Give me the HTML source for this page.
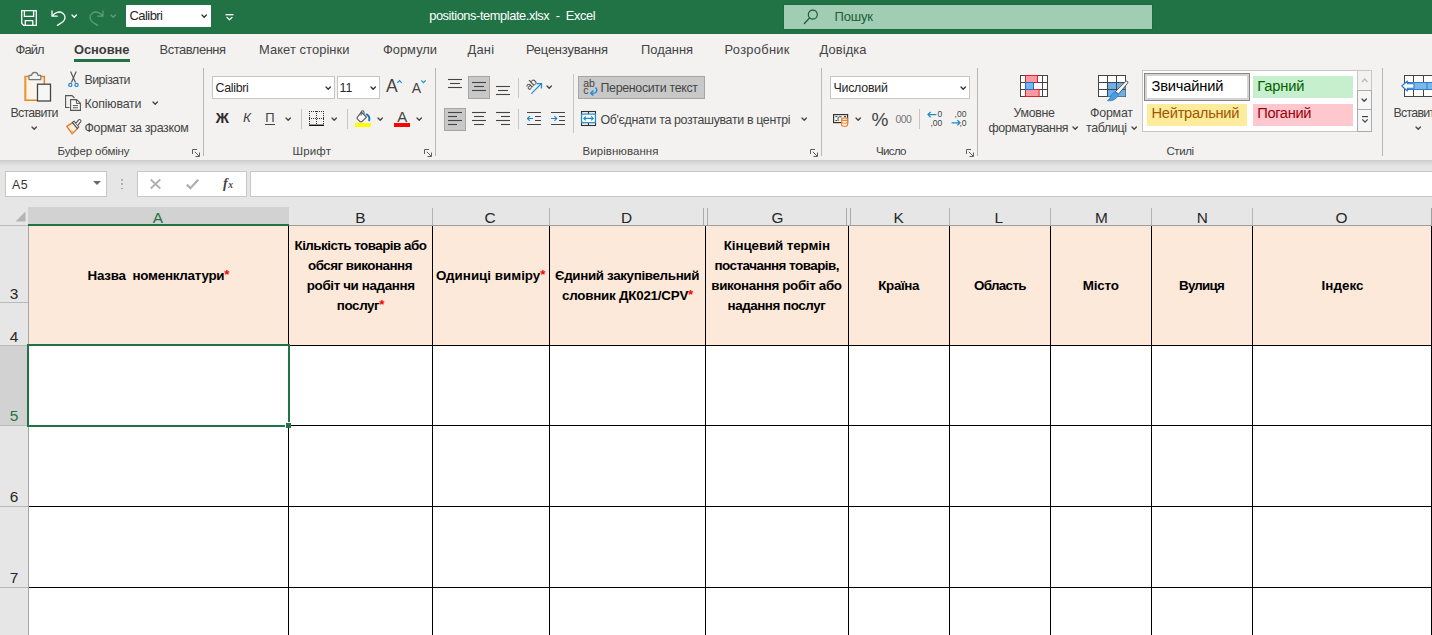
<!DOCTYPE html>
<html lang="uk"><head><meta charset="utf-8"><title>positions-template.xlsx - Excel</title>
<style>
html,body{margin:0;padding:0;background:#fff;}
body{width:1432px;height:635px;overflow:hidden;position:relative;font-family:"Liberation Sans",sans-serif;}
#app{position:absolute;left:0;top:0;width:1432px;height:635px;overflow:hidden;}
</style></head><body><div id="app">
<div style="position:absolute;left:0px;top:0px;width:1432px;height:34px;background:#217346"></div>
<svg style="position:absolute;left:21px;top:10px;overflow:visible;" width="16" height="16" viewBox="0 0 16 16" fill="none"><path d="M0.7 0.7 H15.3 V15.3 H2.6 L0.7 13.4 Z" stroke="#fff" stroke-width="1.3" stroke-linejoin="round"/><path d="M3.4 0.7 V6.4 H12.6 V0.7 M4.3 15.3 V10.6 H11.8 V15.3" stroke="#fff" stroke-width="1.3"/></svg>
<svg style="position:absolute;left:50.8px;top:10px;overflow:visible;" width="16" height="16" viewBox="0 0 16 16" fill="none"><path d="M1 1 V6.2 H6.2 M1.4 6 C3.5 2.2 8.5 0.8 11.8 3.2 C15 5.6 14.6 9.6 11.6 12 L6.4 15.4" stroke="#fff" stroke-width="1.3" stroke-linecap="round" stroke-linejoin="round"/></svg>
<svg style="position:absolute;left:72.4px;top:15.45px;overflow:visible;" width="4.4" height="2.3" viewBox="0 0 4.4 2.3" fill="none"><path d="M0 0 L2.2 2.3 L4.4 0" stroke="#fff" stroke-width="1.3" stroke-linecap="round" stroke-linejoin="round"/></svg>
<svg style="position:absolute;left:88.4px;top:10px;overflow:visible;" width="16" height="16" viewBox="0 0 16 16" fill="none"><path d="M15 1 V6.2 H9.8 M14.6 6 C12.5 2.2 7.5 0.8 4.2 3.2 C1 5.6 1.4 9.6 4.4 12 L9.6 15.4" stroke="#5f9c7b" stroke-width="1.3" stroke-linecap="round" stroke-linejoin="round"/></svg>
<svg style="position:absolute;left:111.2px;top:15.45px;overflow:visible;" width="4.4" height="2.3" viewBox="0 0 4.4 2.3" fill="none"><path d="M0 0 L2.2 2.3 L4.4 0" stroke="#5f9c7b" stroke-width="1.3" stroke-linecap="round" stroke-linejoin="round"/></svg>
<div style="position:absolute;left:126px;top:5px;width:85px;height:22px;background:#fff"></div>
<span style="position:absolute;left:129.5px;top:9.20px;font-family:'Liberation Sans', sans-serif;font-size:13px;line-height:1;font-weight:400;color:#262626;letter-spacing:-0.557px;white-space:pre;">Calibri</span>
<svg style="position:absolute;left:202px;top:15.25px;overflow:visible;" width="4.4" height="2.3" viewBox="0 0 4.4 2.3" fill="none"><path d="M0 0 L2.2 2.3 L4.4 0" stroke="#333" stroke-width="1.3" stroke-linecap="round" stroke-linejoin="round"/></svg>
<svg style="position:absolute;left:225px;top:14px;overflow:visible;" width="9" height="7" viewBox="0 0 9 7" fill="none"><path d="M0.5 0.7 H8.5" stroke="#fff" stroke-width="1.3"/><path d="M2 3.4 L4.5 5.8 L7 3.4" stroke="#fff" stroke-width="1.3" stroke-linecap="round" stroke-linejoin="round"/></svg>
<span style="position:absolute;left:429.2px;top:10.06px;font-family:'Liberation Sans', sans-serif;font-size:12.8px;line-height:1;font-weight:400;color:#ffffff;letter-spacing:-0.404px;white-space:pre;">positions-template.xlsx  -  Excel</span>
<div style="position:absolute;left:784px;top:5px;width:368px;height:24px;background:#a0cdb4;box-shadow:0 0 0 1px #1d6a3f"></div>
<svg style="position:absolute;left:804px;top:10px;overflow:visible;" width="15" height="14" viewBox="0 0 15 14" fill="none"><circle cx="8.8" cy="4.6" r="4.5" stroke="#185c37" stroke-width="1.2"/><path d="M5.6 7.9 L0.4 13.5" stroke="#185c37" stroke-width="1.3" stroke-linecap="round"/></svg>
<span style="position:absolute;left:834.5px;top:9.70px;font-family:'Liberation Sans', sans-serif;font-size:13px;line-height:1;font-weight:400;color:#1b5e38;letter-spacing:-0.176px;white-space:pre;">Пошук</span>
<div style="position:absolute;left:0px;top:34px;width:1432px;height:126px;background:#f3f2f1"></div>
<span style="position:absolute;left:15.5px;top:43.68px;font-family:'Liberation Sans', sans-serif;font-size:12.9px;line-height:1;font-weight:400;color:#444444;letter-spacing:-0.901px;white-space:pre;">Файл</span>
<span style="position:absolute;left:74px;top:43.68px;font-family:'Liberation Sans', sans-serif;font-size:12.9px;line-height:1;font-weight:700;color:#3c3c3c;letter-spacing:-0.042px;white-space:pre;">Основне</span>
<span style="position:absolute;left:159.5px;top:43.68px;font-family:'Liberation Sans', sans-serif;font-size:12.9px;line-height:1;font-weight:400;color:#444444;letter-spacing:-0.438px;white-space:pre;">Вставлення</span>
<span style="position:absolute;left:259px;top:43.68px;font-family:'Liberation Sans', sans-serif;font-size:12.9px;line-height:1;font-weight:400;color:#444444;letter-spacing:0.082px;white-space:pre;">Макет сторінки</span>
<span style="position:absolute;left:383px;top:43.68px;font-family:'Liberation Sans', sans-serif;font-size:12.9px;line-height:1;font-weight:400;color:#444444;letter-spacing:-0.005px;white-space:pre;">Формули</span>
<span style="position:absolute;left:467.5px;top:43.68px;font-family:'Liberation Sans', sans-serif;font-size:12.9px;line-height:1;font-weight:400;color:#444444;letter-spacing:0.203px;white-space:pre;">Дані</span>
<span style="position:absolute;left:526px;top:43.68px;font-family:'Liberation Sans', sans-serif;font-size:12.9px;line-height:1;font-weight:400;color:#444444;letter-spacing:-0.185px;white-space:pre;">Рецензування</span>
<span style="position:absolute;left:641px;top:43.68px;font-family:'Liberation Sans', sans-serif;font-size:12.9px;line-height:1;font-weight:400;color:#444444;letter-spacing:-0.01px;white-space:pre;">Подання</span>
<span style="position:absolute;left:724.5px;top:43.68px;font-family:'Liberation Sans', sans-serif;font-size:12.9px;line-height:1;font-weight:400;color:#444444;letter-spacing:0.293px;white-space:pre;">Розробник</span>
<span style="position:absolute;left:819.5px;top:43.68px;font-family:'Liberation Sans', sans-serif;font-size:12.9px;line-height:1;font-weight:400;color:#444444;letter-spacing:0.104px;white-space:pre;">Довідка</span>
<div style="position:absolute;left:74px;top:59px;width:56px;height:3px;background:#217346"></div>
<div style="position:absolute;left:203px;top:68px;width:1px;height:88px;background:#bab8b6"></div>
<div style="position:absolute;left:435px;top:68px;width:1px;height:88px;background:#bab8b6"></div>
<div style="position:absolute;left:821px;top:68px;width:1px;height:88px;background:#bab8b6"></div>
<div style="position:absolute;left:977px;top:68px;width:1px;height:88px;background:#bab8b6"></div>
<div style="position:absolute;left:1382px;top:68px;width:1px;height:88px;background:#bab8b6"></div>
<span style="position:absolute;left:57.5px;top:146.27px;font-family:'Liberation Sans', sans-serif;font-size:11.5px;line-height:1;font-weight:400;color:#444444;letter-spacing:-0.151px;white-space:pre;">Буфер обміну</span>
<span style="position:absolute;left:292.5px;top:146.27px;font-family:'Liberation Sans', sans-serif;font-size:11.5px;line-height:1;font-weight:400;color:#444444;letter-spacing:0.164px;white-space:pre;">Шрифт</span>
<span style="position:absolute;left:582.5px;top:146.27px;font-family:'Liberation Sans', sans-serif;font-size:11.5px;line-height:1;font-weight:400;color:#444444;letter-spacing:0.051px;white-space:pre;">Вирівнювання</span>
<span style="position:absolute;left:876px;top:146.27px;font-family:'Liberation Sans', sans-serif;font-size:11.5px;line-height:1;font-weight:400;color:#444444;letter-spacing:-0.645px;white-space:pre;">Число</span>
<span style="position:absolute;left:1166.5px;top:146.27px;font-family:'Liberation Sans', sans-serif;font-size:11.5px;line-height:1;font-weight:400;color:#444444;letter-spacing:-0.441px;white-space:pre;">Стилі</span>
<svg style="position:absolute;left:192px;top:148.5px;overflow:visible;" width="8" height="8" viewBox="0 0 8 8" fill="none"><path d="M0.5 5 V0.5 H5 M7.5 3.5 V7.5 H3.5 M2.8 2.8 L7 7" stroke="#605e5c" stroke-width="1"/></svg>
<svg style="position:absolute;left:424px;top:148.5px;overflow:visible;" width="8" height="8" viewBox="0 0 8 8" fill="none"><path d="M0.5 5 V0.5 H5 M7.5 3.5 V7.5 H3.5 M2.8 2.8 L7 7" stroke="#605e5c" stroke-width="1"/></svg>
<svg style="position:absolute;left:810px;top:148.5px;overflow:visible;" width="8" height="8" viewBox="0 0 8 8" fill="none"><path d="M0.5 5 V0.5 H5 M7.5 3.5 V7.5 H3.5 M2.8 2.8 L7 7" stroke="#605e5c" stroke-width="1"/></svg>
<svg style="position:absolute;left:966px;top:148.5px;overflow:visible;" width="8" height="8" viewBox="0 0 8 8" fill="none"><path d="M0.5 5 V0.5 H5 M7.5 3.5 V7.5 H3.5 M2.8 2.8 L7 7" stroke="#605e5c" stroke-width="1"/></svg>
<svg style="position:absolute;left:24px;top:72px;overflow:visible;" width="28" height="30" viewBox="0 0 28 30" fill="none"><path d="M12.9 28.2 H1.1 V4.6 H20.3 V12" stroke="#e8861c" stroke-width="1.5" fill="#fbf4ea"/><path d="M2.5 27 V6 H19" stroke="#f7cf9d" stroke-width="1"/><path d="M5 7.6 V3.4 H7.6 C8 -0.6 13.6 -0.6 14 3.4 H16.8 V7.6 Z" stroke="#767676" stroke-width="1.1" fill="#f3f2f1" stroke-linejoin="round"/><rect x="13.5" y="12.2" width="13" height="16.8" stroke="#444" stroke-width="1.3" fill="#f6f6f6"/></svg>
<span style="position:absolute;left:10.5px;top:106.50px;font-family:'Liberation Sans', sans-serif;font-size:12.4px;line-height:1;font-weight:400;color:#444444;letter-spacing:-0.714px;white-space:pre;">Вставити</span>
<svg style="position:absolute;left:32.4px;top:127.45px;overflow:visible;" width="4.4" height="2.3" viewBox="0 0 4.4 2.3" fill="none"><path d="M0 0 L2.2 2.3 L4.4 0" stroke="#444444" stroke-width="1.3" stroke-linecap="round" stroke-linejoin="round"/></svg>
<svg style="position:absolute;left:67.5px;top:71px;overflow:visible;" width="11" height="16" viewBox="0 0 11 16" fill="none"><path d="M2.6 0.4 L7.4 11.6 M8.2 0.4 L3.4 11.6" stroke="#555" stroke-width="1.15"/><circle cx="2.3" cy="13.9" r="1.6" stroke="#1e8bcd" stroke-width="1.2"/><circle cx="8.5" cy="13.9" r="1.6" stroke="#1e8bcd" stroke-width="1.2"/></svg>
<span style="position:absolute;left:84.5px;top:74.00px;font-family:'Liberation Sans', sans-serif;font-size:12.4px;line-height:1;font-weight:400;color:#444444;letter-spacing:-0.533px;white-space:pre;">Вирізати</span>
<svg style="position:absolute;left:65px;top:95px;overflow:visible;" width="16" height="16" viewBox="0 0 16 16" fill="none"><path d="M4.5 12.5 H0.6 V0.6 H7 L9.5 3" stroke="#555" stroke-width="1.1"/><path d="M5.6 4.6 H11.6 L15.4 8.2 V15.4 H5.6 Z" stroke="#555" stroke-width="1.1" fill="#fafafa"/><path d="M11.4 4.8 V8.4 H15.2 M7.8 10.6 H13 M7.8 12.8 H13" stroke="#555" stroke-width="1"/></svg>
<span style="position:absolute;left:84.5px;top:97.50px;font-family:'Liberation Sans', sans-serif;font-size:12.4px;line-height:1;font-weight:400;color:#444444;letter-spacing:-0.191px;white-space:pre;">Копіювати</span>
<svg style="position:absolute;left:153.4px;top:102.05px;overflow:visible;" width="4.4" height="2.3" viewBox="0 0 4.4 2.3" fill="none"><path d="M0 0 L2.2 2.3 L4.4 0" stroke="#444444" stroke-width="1.3" stroke-linecap="round" stroke-linejoin="round"/></svg>
<svg style="position:absolute;left:65.5px;top:119px;overflow:visible;" width="16" height="16" viewBox="0 0 16 16" fill="none"><path d="M0.8 7.4 L6.6 3.6 L11.4 9.6 L6.2 14.8 Z" fill="#fff3e2" stroke="#e8761a" stroke-width="1.3" stroke-linejoin="round"/><path d="M4.6 11 L8 12.4 L6.2 14.4 Z" fill="#f7b469"/><path d="M6.4 3.4 L8 2.2 L12.8 8 L11.4 9.6 Z" stroke="#555" stroke-width="1.1" fill="#fafafa" stroke-linejoin="round"/><path d="M9.8 4.4 L12.6 0.9 C13.6 -0.2 15.6 1.4 14.8 2.6 L12 6.2" stroke="#555" stroke-width="1.1" fill="#fafafa"/></svg>
<span style="position:absolute;left:84.5px;top:121.50px;font-family:'Liberation Sans', sans-serif;font-size:12.4px;line-height:1;font-weight:400;color:#444444;letter-spacing:-0.322px;white-space:pre;">Формат за зразком</span>
<div style="position:absolute;left:212px;top:76px;width:123px;height:23px;background:#fff;border:1px solid #c6c6c6;box-sizing:border-box"></div>
<span style="position:absolute;left:215.5px;top:81.50px;font-family:'Liberation Sans', sans-serif;font-size:12.4px;line-height:1;font-weight:400;color:#262626;letter-spacing:-0.304px;white-space:pre;">Calibri</span>
<svg style="position:absolute;left:325.8px;top:87.15px;overflow:visible;" width="4.4" height="2.3" viewBox="0 0 4.4 2.3" fill="none"><path d="M0 0 L2.2 2.3 L4.4 0" stroke="#333" stroke-width="1.3" stroke-linecap="round" stroke-linejoin="round"/></svg>
<div style="position:absolute;left:337px;top:76px;width:43px;height:23px;background:#fff;border:1px solid #c6c6c6;box-sizing:border-box"></div>
<span style="position:absolute;left:339.5px;top:81.50px;font-family:'Liberation Sans', sans-serif;font-size:12.4px;line-height:1;font-weight:400;color:#262626;letter-spacing:0.125px;white-space:pre;">11</span>
<svg style="position:absolute;left:371px;top:87.15px;overflow:visible;" width="4.4" height="2.3" viewBox="0 0 4.4 2.3" fill="none"><path d="M0 0 L2.2 2.3 L4.4 0" stroke="#333" stroke-width="1.3" stroke-linecap="round" stroke-linejoin="round"/></svg>
<span style="position:absolute;left:386px;top:77.59px;font-family:'Liberation Sans', sans-serif;font-size:17.5px;line-height:1;font-weight:400;color:#444444;letter-spacing:0px;white-space:pre;">A</span>
<svg style="position:absolute;left:397.4px;top:80.2px;overflow:visible;" width="5" height="3" viewBox="0 0 5 3" fill="none"><path d="M0.3 2.8 L2.5 0.5 L4.7 2.8" stroke="#1e8bcd" stroke-width="1.2"/></svg>
<span style="position:absolute;left:411.8px;top:80.55px;font-family:'Liberation Sans', sans-serif;font-size:14px;line-height:1;font-weight:400;color:#444444;letter-spacing:0px;white-space:pre;">A</span>
<svg style="position:absolute;left:421px;top:80.2px;overflow:visible;" width="5" height="3" viewBox="0 0 5 3" fill="none"><path d="M0.3 0.4 L2.5 2.7 L4.7 0.4" stroke="#1e8bcd" stroke-width="1.2"/></svg>
<span style="position:absolute;left:215.8px;top:110.53px;font-family:'Liberation Sans', sans-serif;font-size:14.5px;line-height:1;font-weight:700;color:#2b2b2b;letter-spacing:0px;white-space:pre;">Ж</span>
<span style="position:absolute;left:243px;top:111.17px;font-family:'Liberation Sans', sans-serif;font-size:13.5px;line-height:1;font-weight:400;color:#444444;font-style:italic;letter-spacing:0px;white-space:pre;">К</span>
<span style="position:absolute;left:265.3px;top:111.30px;font-family:'Liberation Sans', sans-serif;font-size:13px;line-height:1;font-weight:400;color:#444444;letter-spacing:0px;white-space:pre;">П</span>
<div style="position:absolute;left:265px;top:123.6px;width:10px;height:1px;background:#444444"></div>
<svg style="position:absolute;left:285.7px;top:118.35px;overflow:visible;" width="4.4" height="2.3" viewBox="0 0 4.4 2.3" fill="none"><path d="M0 0 L2.2 2.3 L4.4 0" stroke="#444444" stroke-width="1.3" stroke-linecap="round" stroke-linejoin="round"/></svg>
<div style="position:absolute;left:301px;top:109px;width:1px;height:20px;background:#c8c6c4"></div>
<svg style="position:absolute;left:309px;top:111px;overflow:visible;" width="15" height="15" viewBox="0 0 15 15" fill="none"><path d="M0.5 0 V14 M7.5 0 V14 M14.5 0 V14" stroke="#333" stroke-width="1" stroke-dasharray="1 1"/><path d="M0 0.5 H15 M0 7.5 H15" stroke="#333" stroke-width="1" stroke-dasharray="1 1"/><path d="M0 14.3 H15" stroke="#111" stroke-width="1.4"/></svg>
<svg style="position:absolute;left:331.9px;top:118.35px;overflow:visible;" width="4.4" height="2.3" viewBox="0 0 4.4 2.3" fill="none"><path d="M0 0 L2.2 2.3 L4.4 0" stroke="#444444" stroke-width="1.3" stroke-linecap="round" stroke-linejoin="round"/></svg>
<div style="position:absolute;left:347.3px;top:109px;width:1px;height:20px;background:#c8c6c4"></div>
<svg style="position:absolute;left:356px;top:110px;overflow:visible;" width="15" height="13" viewBox="0 0 15 13" fill="none"><path d="M5.4 2.2 L10.4 7.2 L6.2 11.4 C5.4 12.2 4.6 12.2 3.8 11.4 L1.6 9.2 C0.8 8.4 0.8 7.6 1.6 6.8 Z" stroke="#555" stroke-width="1.15" fill="#fafafa" stroke-linejoin="round"/><path d="M5.2 5.4 V2.2 C5.2 0.2 8 0.2 8 2.2 V4.6" stroke="#555" stroke-width="1.1"/><path d="M10.6 4.4 C13.2 5.6 13.6 8.4 13.2 10.4" stroke="#1b6ec2" stroke-width="1.9" stroke-linecap="round"/></svg>
<div style="position:absolute;left:355px;top:123px;width:16px;height:4px;background:#ffff00"></div>
<svg style="position:absolute;left:377.9px;top:118.35px;overflow:visible;" width="4.4" height="2.3" viewBox="0 0 4.4 2.3" fill="none"><path d="M0 0 L2.2 2.3 L4.4 0" stroke="#444444" stroke-width="1.3" stroke-linecap="round" stroke-linejoin="round"/></svg>
<span style="position:absolute;left:397.3px;top:108.90px;font-family:'Liberation Sans', sans-serif;font-size:15px;line-height:1;font-weight:400;color:#444444;letter-spacing:0px;white-space:pre;">A</span>
<div style="position:absolute;left:394px;top:123px;width:16px;height:4px;background:#ff0000"></div>
<svg style="position:absolute;left:416.9px;top:118.35px;overflow:visible;" width="4.4" height="2.3" viewBox="0 0 4.4 2.3" fill="none"><path d="M0 0 L2.2 2.3 L4.4 0" stroke="#444444" stroke-width="1.3" stroke-linecap="round" stroke-linejoin="round"/></svg>
<svg style="position:absolute;left:448px;top:79px;overflow:visible;" width="14" height="12" viewBox="0 0 14 12" fill="none"><path d="M0 0.5 H14" stroke="#444" stroke-width="1.1"/><path d="M2 4.5 H12" stroke="#444" stroke-width="1.1"/><path d="M0 8.5 H14" stroke="#444" stroke-width="1.1"/></svg>
<div style="position:absolute;left:468px;top:76px;width:22px;height:22.5px;background:#c8c8c8;border:1px solid #a6a6a6;box-sizing:border-box"></div>
<svg style="position:absolute;left:472px;top:82px;overflow:visible;" width="14" height="12" viewBox="0 0 14 12" fill="none"><path d="M0 0.5 H14" stroke="#444" stroke-width="1.1"/><path d="M2 4.5 H12" stroke="#444" stroke-width="1.1"/><path d="M0 8.5 H14" stroke="#444" stroke-width="1.1"/></svg>
<svg style="position:absolute;left:496px;top:86px;overflow:visible;" width="14" height="12" viewBox="0 0 14 12" fill="none"><path d="M0 0.5 H14" stroke="#444" stroke-width="1.1"/><path d="M2 4.5 H12" stroke="#444" stroke-width="1.1"/><path d="M0 8.5 H14" stroke="#444" stroke-width="1.1"/></svg>
<div style="position:absolute;left:518px;top:77.5px;width:1px;height:20px;background:#c8c6c4"></div>
<span style="position:absolute;left:530px;top:80.51px;font-family:'Liberation Sans', sans-serif;font-size:10.5px;line-height:1;font-weight:400;color:#444444;letter-spacing:0px;white-space:pre;transform:rotate(-42deg);transform-origin:0 100%;">ab</span>
<svg style="position:absolute;left:531px;top:83px;overflow:visible;" width="11" height="11" viewBox="0 0 11 11" fill="none"><path d="M0.4 10.6 L10.4 0.6 M5.6 0.5 H10.5 V5.4" stroke="#1e8bcd" stroke-width="1.25"/></svg>
<svg style="position:absolute;left:547.1px;top:86.35px;overflow:visible;" width="4.4" height="2.3" viewBox="0 0 4.4 2.3" fill="none"><path d="M0 0 L2.2 2.3 L4.4 0" stroke="#444444" stroke-width="1.3" stroke-linecap="round" stroke-linejoin="round"/></svg>
<div style="position:absolute;left:573px;top:74px;width:1px;height:58.5px;background:#c8c6c4"></div>
<div style="position:absolute;left:578px;top:76px;width:127px;height:22.5px;background:#c8c8c8;border:1px solid #a6a6a6;box-sizing:border-box"></div>
<span style="position:absolute;left:583.2px;top:77.91px;font-family:'Liberation Sans', sans-serif;font-size:10.5px;line-height:1;font-weight:400;color:#444444;letter-spacing:0px;white-space:pre;">ab</span>
<span style="position:absolute;left:583.2px;top:85.31px;font-family:'Liberation Sans', sans-serif;font-size:10.5px;line-height:1;font-weight:400;color:#444444;letter-spacing:0px;white-space:pre;">c</span>
<svg style="position:absolute;left:588.5px;top:86.5px;overflow:visible;" width="9" height="9" viewBox="0 0 9 9" fill="none"><path d="M6.5 0.5 C9.5 3.5 7 7 2.2 6.2 M4.4 3.6 L1.6 6.2 L4.4 8.6" stroke="#1e8bcd" stroke-width="1.3" fill="none"/></svg>
<span style="position:absolute;left:600.5px;top:81.50px;font-family:'Liberation Sans', sans-serif;font-size:12.4px;line-height:1;font-weight:400;color:#444444;letter-spacing:-0.322px;white-space:pre;">Переносити текст</span>
<div style="position:absolute;left:444px;top:108px;width:22px;height:22.5px;background:#c8c8c8;border:1px solid #a6a6a6;box-sizing:border-box"></div>
<svg style="position:absolute;left:448px;top:112px;overflow:visible;" width="14" height="16" viewBox="0 0 14 16" fill="none"><path d="M0 0.5 H14" stroke="#444" stroke-width="1.1"/><path d="M0 4.5 H9" stroke="#444" stroke-width="1.1"/><path d="M0 8.5 H14" stroke="#444" stroke-width="1.1"/><path d="M0 12.5 H9" stroke="#444" stroke-width="1.1"/></svg>
<svg style="position:absolute;left:472px;top:112px;overflow:visible;" width="14" height="16" viewBox="0 0 14 16" fill="none"><path d="M0 0.5 H14" stroke="#444" stroke-width="1.1"/><path d="M2 4.5 H12" stroke="#444" stroke-width="1.1"/><path d="M0 8.5 H14" stroke="#444" stroke-width="1.1"/><path d="M2 12.5 H12" stroke="#444" stroke-width="1.1"/></svg>
<svg style="position:absolute;left:496px;top:112px;overflow:visible;" width="14" height="16" viewBox="0 0 14 16" fill="none"><path d="M0 0.5 H14" stroke="#444" stroke-width="1.1"/><path d="M5 4.5 H14" stroke="#444" stroke-width="1.1"/><path d="M0 8.5 H14" stroke="#444" stroke-width="1.1"/><path d="M5 12.5 H14" stroke="#444" stroke-width="1.1"/></svg>
<div style="position:absolute;left:518px;top:109px;width:1px;height:20px;background:#c8c6c4"></div>
<svg style="position:absolute;left:527px;top:112px;overflow:visible;" width="14" height="13" viewBox="0 0 14 13" fill="none"><path d="M0 0.5 H14 M8 4.5 H14 M8 8.5 H14 M0 12.5 H14" stroke="#444" stroke-width="1.1"/><path d="M6 6.5 H0.6 M2.8 4.2 L0.5 6.5 L2.8 8.8" stroke="#1e8bcd" stroke-width="1.2"/></svg>
<svg style="position:absolute;left:550.5px;top:112px;overflow:visible;" width="14" height="13" viewBox="0 0 14 13" fill="none"><path d="M0 0.5 H14 M8 4.5 H14 M8 8.5 H14 M0 12.5 H14" stroke="#444" stroke-width="1.1"/><path d="M0 6.5 H5.6 M3.4 4.2 L5.7 6.5 L3.4 8.8" stroke="#1e8bcd" stroke-width="1.2"/></svg>
<svg style="position:absolute;left:581px;top:111px;overflow:visible;" width="15" height="15" viewBox="0 0 15 15" fill="none"><rect x="0.5" y="0.5" width="14" height="14" stroke="#333" stroke-width="1.1"/><path d="M7.5 0.5 V3 M7.5 12 V14.5" stroke="#333" stroke-width="1.1"/><rect x="0.6" y="3.1" width="13.8" height="8.6" stroke="#1e8bcd" stroke-width="1.2" fill="#fff"/><path d="M2.8 7.4 H12.2 M4.8 5.4 L2.8 7.4 L4.8 9.4 M10.2 5.4 L12.2 7.4 L10.2 9.4" stroke="#1e8bcd" stroke-width="1.2"/></svg>
<span style="position:absolute;left:600.5px;top:113.50px;font-family:'Liberation Sans', sans-serif;font-size:12.4px;line-height:1;font-weight:400;color:#444444;letter-spacing:-0.345px;white-space:pre;">Об'єднати та розташувати в центрі</span>
<svg style="position:absolute;left:802px;top:118.35px;overflow:visible;" width="4.4" height="2.3" viewBox="0 0 4.4 2.3" fill="none"><path d="M0 0 L2.2 2.3 L4.4 0" stroke="#444444" stroke-width="1.3" stroke-linecap="round" stroke-linejoin="round"/></svg>
<div style="position:absolute;left:830px;top:76px;width:140px;height:23px;background:#fff;border:1px solid #c6c6c6;box-sizing:border-box"></div>
<span style="position:absolute;left:833.5px;top:81.50px;font-family:'Liberation Sans', sans-serif;font-size:12.4px;line-height:1;font-weight:400;color:#262626;letter-spacing:-0.252px;white-space:pre;">Числовий</span>
<svg style="position:absolute;left:961.1px;top:87.15px;overflow:visible;" width="4.4" height="2.3" viewBox="0 0 4.4 2.3" fill="none"><path d="M0 0 L2.2 2.3 L4.4 0" stroke="#333" stroke-width="1.3" stroke-linecap="round" stroke-linejoin="round"/></svg>
<svg style="position:absolute;left:832.5px;top:113px;overflow:visible;" width="17" height="14" viewBox="0 0 17 14" fill="none"><rect x="0.6" y="1.6" width="14" height="8" stroke="#333" stroke-width="1.2" fill="#fafafa"/><path d="M2.4 3.6 H4.4 M2.4 7.6 H4.4 M11 3.6 H13 M6 7.6 C4.6 7.6 4.6 3.8 6.4 3.8 H8.6" stroke="#333" stroke-width="1"/><path d="M8.6 6.2 V12 C8.6 13.6 14.6 13.6 14.6 12 V6.2" fill="#fdf3e4" stroke="#e8812d" stroke-width="1.1"/><ellipse cx="11.6" cy="6.2" rx="3" ry="1.3" fill="#fdf3e4" stroke="#e8812d" stroke-width="1.1"/><path d="M8.6 9 C8.6 10.6 14.6 10.6 14.6 9" stroke="#e8812d" stroke-width="1"/></svg>
<svg style="position:absolute;left:855.8px;top:118.35px;overflow:visible;" width="4.4" height="2.3" viewBox="0 0 4.4 2.3" fill="none"><path d="M0 0 L2.2 2.3 L4.4 0" stroke="#444444" stroke-width="1.3" stroke-linecap="round" stroke-linejoin="round"/></svg>
<span style="position:absolute;left:871.5px;top:109.52px;font-family:'Liberation Sans', sans-serif;font-size:19px;line-height:1;font-weight:400;color:#444444;letter-spacing:0px;white-space:pre;">%</span>
<span style="position:absolute;left:895.5px;top:113.71px;font-family:'Liberation Sans', sans-serif;font-size:10.5px;line-height:1;font-weight:400;color:#777;letter-spacing:-0.616px;white-space:pre;">000</span>
<div style="position:absolute;left:919px;top:109px;width:1px;height:20px;background:#c8c6c4"></div>
<svg style="position:absolute;left:927px;top:111px;overflow:visible;" width="15" height="15" viewBox="0 0 15 15" fill="none"><path d="M9.4 3.6 H1 M3.6 1 L1 3.6 L3.6 6.2" stroke="#1e8bcd" stroke-width="1.25"/></svg>
<span style="position:absolute;left:937.6px;top:110.40px;font-family:'Liberation Sans', sans-serif;font-size:8.5px;line-height:1;font-weight:400;color:#444444;letter-spacing:0px;white-space:pre;">0</span>
<span style="position:absolute;left:930.4px;top:118.80px;font-family:'Liberation Sans', sans-serif;font-size:8.5px;line-height:1;font-weight:400;color:#444444;letter-spacing:0px;white-space:pre;">,00</span>
<svg style="position:absolute;left:951px;top:111px;overflow:visible;" width="15" height="15" viewBox="0 0 15 15" fill="none"><path d="M0.6 11.8 H9 M6.4 9.2 L9 11.8 L6.4 14.4" stroke="#1e8bcd" stroke-width="1.25"/></svg>
<span style="position:absolute;left:954.6px;top:110.40px;font-family:'Liberation Sans', sans-serif;font-size:8.5px;line-height:1;font-weight:400;color:#444444;letter-spacing:0px;white-space:pre;">,00</span>
<span style="position:absolute;left:959.4px;top:118.80px;font-family:'Liberation Sans', sans-serif;font-size:8.5px;line-height:1;font-weight:400;color:#444444;letter-spacing:0px;white-space:pre;">,0</span>
<svg style="position:absolute;left:1020px;top:75px;overflow:visible;" width="28" height="22" viewBox="0 0 28 22" fill="none"><rect x="0.5" y="0.5" width="27" height="21" fill="#fff" stroke="#444" stroke-width="1"/><path d="M5.5 0.5 V21.5 M22.5 0.5 V21.5 M0.5 7.5 H27.5 M0.5 14.5 H27.5" stroke="#444" stroke-width="1"/><rect x="5.5" y="0.5" width="12" height="7" fill="#fb9aa2" stroke="#e2202e" stroke-width="1"/><rect x="5.5" y="14.5" width="13.6" height="7" fill="#fb9aa2" stroke="#e2202e" stroke-width="1"/><rect x="5.5" y="7.5" width="8" height="7" fill="#79b4ea" stroke="#1f73c9" stroke-width="1"/></svg>
<span style="position:absolute;left:1013.5px;top:106.50px;font-family:'Liberation Sans', sans-serif;font-size:12.4px;line-height:1;font-weight:400;color:#444444;letter-spacing:-0.309px;white-space:pre;">Умовне</span>
<span style="position:absolute;left:988.5px;top:122.00px;font-family:'Liberation Sans', sans-serif;font-size:12.4px;line-height:1;font-weight:400;color:#444444;letter-spacing:-0.442px;white-space:pre;">форматування</span>
<svg style="position:absolute;left:1073.4px;top:127.05px;overflow:visible;" width="4.4" height="2.3" viewBox="0 0 4.4 2.3" fill="none"><path d="M0 0 L2.2 2.3 L4.4 0" stroke="#444444" stroke-width="1.3" stroke-linecap="round" stroke-linejoin="round"/></svg>
<svg style="position:absolute;left:1097.5px;top:75px;overflow:visible;" width="31" height="27" viewBox="0 0 31 27" fill="none"><rect x="0.5" y="0.5" width="27" height="21" fill="#fff" stroke="#444" stroke-width="1"/><rect x="9.5" y="7.5" width="18" height="14" fill="#6cb0ea"/><path d="M0.5 7.5 H27.5 M0.5 14.5 H27.5 M9.5 0.5 V21.5 M18.5 0.5 V21.5" stroke="#444" stroke-width="1"/><path d="M27.6 6.6 C29 5.4 30.6 6.8 29.6 8.2 L20.6 19 L17.4 16.6 Z" fill="#fafafa" stroke="#555" stroke-width="1"/><path d="M17 16.8 L20.4 19.4 C19.6 23.4 14.6 26.6 9.4 25.6 C12.8 24.2 12.4 18.6 17 16.8 Z" fill="#4a9be0" stroke="#2b7fcf" stroke-width="0.8"/></svg>
<span style="position:absolute;left:1090px;top:106.50px;font-family:'Liberation Sans', sans-serif;font-size:12.4px;line-height:1;font-weight:400;color:#444444;letter-spacing:-0.203px;white-space:pre;">Формат</span>
<span style="position:absolute;left:1086px;top:122.00px;font-family:'Liberation Sans', sans-serif;font-size:12.4px;line-height:1;font-weight:400;color:#444444;letter-spacing:-0.328px;white-space:pre;">таблиці</span>
<svg style="position:absolute;left:1131.6px;top:127.05px;overflow:visible;" width="4.4" height="2.3" viewBox="0 0 4.4 2.3" fill="none"><path d="M0 0 L2.2 2.3 L4.4 0" stroke="#444444" stroke-width="1.3" stroke-linecap="round" stroke-linejoin="round"/></svg>
<div style="position:absolute;left:1142px;top:70px;width:230px;height:62px;background:#fff;border:1px solid #c6c6c6;box-sizing:border-box"></div>
<div style="position:absolute;left:1144px;top:73px;width:106px;height:28px;background:#fff;border:1px solid #868686;box-sizing:border-box;box-shadow:inset 0 0 0 2px #d4d4d4"></div>
<span style="position:absolute;left:1151.5px;top:78.96px;font-family:'Liberation Sans', sans-serif;font-size:14.7px;line-height:1;font-weight:400;color:#000;letter-spacing:-0.18px;white-space:pre;">Звичайний</span>
<div style="position:absolute;left:1253px;top:76px;width:100px;height:21.5px;background:#c6efce"></div>
<span style="position:absolute;left:1257.2px;top:78.96px;font-family:'Liberation Sans', sans-serif;font-size:14.7px;line-height:1;font-weight:400;color:#006100;letter-spacing:-0.14px;white-space:pre;">Гарний</span>
<div style="position:absolute;left:1147px;top:104px;width:100px;height:21.5px;background:#ffeb9c"></div>
<span style="position:absolute;left:1151.5px;top:106.26px;font-family:'Liberation Sans', sans-serif;font-size:14.7px;line-height:1;font-weight:400;color:#9c5700;letter-spacing:-0.28px;white-space:pre;">Нейтральний</span>
<div style="position:absolute;left:1253px;top:104px;width:100px;height:21.5px;background:#ffc7ce"></div>
<span style="position:absolute;left:1257.2px;top:106.26px;font-family:'Liberation Sans', sans-serif;font-size:14.7px;line-height:1;font-weight:400;color:#9c0006;letter-spacing:-0.359px;white-space:pre;">Поганий</span>
<div style="position:absolute;left:1357px;top:70px;width:15px;height:21px;background:#f3f2f1;border:1px solid #c6c6c6;box-sizing:border-box"></div>
<div style="position:absolute;left:1357px;top:90px;width:15px;height:20px;background:#f6f6f6;border:1px solid #ababab;box-sizing:border-box"></div>
<div style="position:absolute;left:1357px;top:109px;width:15px;height:23px;background:#f6f6f6;border:1px solid #ababab;box-sizing:border-box"></div>
<svg style="position:absolute;left:1361.8px;top:78.6px;overflow:visible;" width="5.5" height="3" viewBox="0 0 5.5 3" fill="none"><path d="M0 3 L2.75 0 L5.5 3" stroke="#b8b8b8" stroke-width="1.2"/></svg>
<svg style="position:absolute;left:1362.3px;top:99.05px;overflow:visible;" width="4.4" height="2.3" viewBox="0 0 4.4 2.3" fill="none"><path d="M0 0 L2.2 2.3 L4.4 0" stroke="#444444" stroke-width="1.3" stroke-linecap="round" stroke-linejoin="round"/></svg>
<svg style="position:absolute;left:1361.5px;top:116.4px;overflow:visible;" width="6" height="7" viewBox="0 0 6 7" fill="none"><path d="M0 0.6 H6" stroke="#444" stroke-width="1.2"/><path d="M0.3 3.4 L3 6.2 L5.7 3.4" stroke="#444" stroke-width="1.2"/></svg>
<svg style="position:absolute;left:1401px;top:75px;overflow:visible;" width="31" height="22" viewBox="0 0 31 22" fill="none"><rect x="3.5" y="0.5" width="30" height="21" fill="#fff" stroke="#444" stroke-width="1"/><path d="M3.5 7.5 H34 M3.5 14.5 H34 M12.5 0.5 V7.5 M12.5 14.5 V21.5 M22.5 0.5 V7.5 M22.5 14.5 V21.5" stroke="#444" stroke-width="1"/><rect x="8" y="7.5" width="26" height="7" fill="#7db7ea" stroke="#2b7fcf" stroke-width="1"/><path d="M26 7.5 V14.5" stroke="#2b7fcf" stroke-width="1"/><path d="M6.4 6 L0.8 11 L6.4 16 V13.2 H13 V8.8 H6.4 Z" fill="#fafafa" stroke="#2b7fcf" stroke-width="1.1" stroke-linejoin="round"/></svg>
<span style="position:absolute;left:1393.4px;top:106.50px;font-family:'Liberation Sans', sans-serif;font-size:12.4px;line-height:1;font-weight:400;color:#444444;letter-spacing:-0.714px;white-space:pre;">Вставити</span>
<svg style="position:absolute;left:1415.5px;top:127.45px;overflow:visible;" width="4.4" height="2.3" viewBox="0 0 4.4 2.3" fill="none"><path d="M0 0 L2.2 2.3 L4.4 0" stroke="#444444" stroke-width="1.3" stroke-linecap="round" stroke-linejoin="round"/></svg>
<div style="position:absolute;left:0px;top:160px;width:1432px;height:7px;background:linear-gradient(#cbcbcb,#d9d9d9 40%,#e6e6e6)"></div>
<div style="position:absolute;left:0px;top:166px;width:1432px;height:41px;background:#e6e6e6"></div>
<div style="position:absolute;left:5px;top:171px;width:102px;height:26px;background:#fff;border:1px solid #c9c9c9;box-sizing:border-box"></div>
<span style="position:absolute;left:12px;top:178.79px;font-family:'Liberation Sans', sans-serif;font-size:12.3px;line-height:1;font-weight:400;color:#333;letter-spacing:0.453px;white-space:pre;">A5</span>
<svg style="position:absolute;left:92.5px;top:181px;overflow:visible;" width="8" height="4" viewBox="0 0 8 4" fill="none"><path d="M0 0 H8 L4 4 Z" fill="#6a6a6a"/></svg>
<div style="position:absolute;left:121px;top:179px;width:1.6px;height:1.6px;background:#a0a0a0;border-radius:1px"></div>
<div style="position:absolute;left:121px;top:183.3px;width:1.6px;height:1.6px;background:#a0a0a0;border-radius:1px"></div>
<div style="position:absolute;left:121px;top:187.6px;width:1.6px;height:1.6px;background:#a0a0a0;border-radius:1px"></div>
<div style="position:absolute;left:137px;top:171px;width:110px;height:26px;background:#fff;border:1px solid #c9c9c9;box-sizing:border-box"></div>
<svg style="position:absolute;left:150px;top:179px;overflow:visible;" width="11" height="10" viewBox="0 0 11 10" fill="none"><path d="M0.7 0.5 L10.3 9.5 M10.3 0.5 L0.7 9.5" stroke="#b0b0b0" stroke-width="1.8"/></svg>
<svg style="position:absolute;left:185.5px;top:179px;overflow:visible;" width="13" height="10" viewBox="0 0 13 10" fill="none"><path d="M0.8 5.6 L4.4 9.2 L12.2 0.8" stroke="#b0b0b0" stroke-width="2.3"/></svg>
<span style="position:absolute;left:223px;top:177.15px;font-family:'Liberation Serif', serif;font-size:14px;line-height:1;font-weight:700;color:#444;font-style:italic;letter-spacing:0px;white-space:pre;">f</span>
<span style="position:absolute;left:228.3px;top:180.96px;font-family:'Liberation Serif', serif;font-size:9.5px;line-height:1;font-weight:700;color:#444;font-style:italic;letter-spacing:0px;white-space:pre;">x</span>
<div style="position:absolute;left:250px;top:171px;width:1190px;height:26px;background:#fff;border:1px solid #c9c9c9;box-sizing:border-box"></div>
<div style="position:absolute;left:0px;top:207px;width:1432px;height:428px;background:#fff"></div>
<div style="position:absolute;left:0px;top:207px;width:1432px;height:19px;background:#e6e6e6"></div>
<div style="position:absolute;left:0px;top:226px;width:28px;height:409px;background:#e6e6e6"></div>
<svg style="position:absolute;left:14.5px;top:211px;overflow:visible;" width="11" height="11" viewBox="0 0 11 11" fill="none"><path d="M10.5 0.5 V10.5 H0.5 Z" fill="#b4b4b4"/></svg>
<div style="position:absolute;left:28px;top:207px;width:261px;height:17px;background:#d2d2d2"></div>
<div style="position:absolute;left:28px;top:224px;width:261px;height:2px;background:#217346"></div>
<div style="position:absolute;left:289px;top:225px;width:1143px;height:1px;background:#9e9e9e"></div>
<div style="position:absolute;left:0px;top:225px;width:28px;height:1px;background:#b9b9b9"></div>
<span style="position:absolute;left:152.8px;top:209.76px;font-family:'Liberation Sans', sans-serif;font-size:15.4px;line-height:1;font-weight:400;color:#217346;letter-spacing:0px;white-space:pre;">A</span>
<span style="position:absolute;left:355.3px;top:209.76px;font-family:'Liberation Sans', sans-serif;font-size:15.4px;line-height:1;font-weight:400;color:#262626;letter-spacing:0px;white-space:pre;">B</span>
<span style="position:absolute;left:484.5px;top:209.76px;font-family:'Liberation Sans', sans-serif;font-size:15.4px;line-height:1;font-weight:400;color:#262626;letter-spacing:0px;white-space:pre;">C</span>
<span style="position:absolute;left:621px;top:209.76px;font-family:'Liberation Sans', sans-serif;font-size:15.4px;line-height:1;font-weight:400;color:#262626;letter-spacing:0px;white-space:pre;">D</span>
<span style="position:absolute;left:771.5px;top:209.76px;font-family:'Liberation Sans', sans-serif;font-size:15.4px;line-height:1;font-weight:400;color:#262626;letter-spacing:0px;white-space:pre;">G</span>
<span style="position:absolute;left:893.5px;top:209.76px;font-family:'Liberation Sans', sans-serif;font-size:15.4px;line-height:1;font-weight:400;color:#262626;letter-spacing:0px;white-space:pre;">K</span>
<span style="position:absolute;left:994.5px;top:209.76px;font-family:'Liberation Sans', sans-serif;font-size:15.4px;line-height:1;font-weight:400;color:#262626;letter-spacing:0px;white-space:pre;">L</span>
<span style="position:absolute;left:1095px;top:209.76px;font-family:'Liberation Sans', sans-serif;font-size:15.4px;line-height:1;font-weight:400;color:#262626;letter-spacing:0px;white-space:pre;">M</span>
<span style="position:absolute;left:1196.8px;top:209.76px;font-family:'Liberation Sans', sans-serif;font-size:15.4px;line-height:1;font-weight:400;color:#262626;letter-spacing:0px;white-space:pre;">N</span>
<span style="position:absolute;left:1335.5px;top:209.76px;font-family:'Liberation Sans', sans-serif;font-size:15.4px;line-height:1;font-weight:400;color:#262626;letter-spacing:0px;white-space:pre;">O</span>
<div style="position:absolute;left:432px;top:208px;width:1px;height:17px;background:#b4b4b4"></div>
<div style="position:absolute;left:549px;top:208px;width:1px;height:17px;background:#b4b4b4"></div>
<div style="position:absolute;left:949px;top:208px;width:1px;height:17px;background:#b4b4b4"></div>
<div style="position:absolute;left:1050px;top:208px;width:1px;height:17px;background:#b4b4b4"></div>
<div style="position:absolute;left:1151px;top:208px;width:1px;height:17px;background:#b4b4b4"></div>
<div style="position:absolute;left:1252px;top:208px;width:1px;height:17px;background:#b4b4b4"></div>
<div style="position:absolute;left:703px;top:208px;width:1px;height:17px;background:#ababab"></div>
<div style="position:absolute;left:707px;top:208px;width:1px;height:17px;background:#ababab"></div>
<div style="position:absolute;left:846px;top:208px;width:1px;height:17px;background:#ababab"></div>
<div style="position:absolute;left:850px;top:208px;width:1px;height:17px;background:#ababab"></div>
<div style="position:absolute;left:1431px;top:208px;width:1px;height:18px;background:#9e9e9e"></div>
<div style="position:absolute;left:28px;top:226px;width:1px;height:409px;background:#a6a6a6"></div>
<div style="position:absolute;left:29px;top:226px;width:1402px;height:119px;background:#fde9d9"></div>
<div style="position:absolute;left:0px;top:302px;width:28px;height:1px;background:#b9b9b9"></div>
<div style="position:absolute;left:0px;top:345px;width:28px;height:81px;background:#d2d2d2"></div>
<div style="position:absolute;left:0px;top:345px;width:28px;height:1px;background:#b9b9b9"></div>
<div style="position:absolute;left:0px;top:425px;width:28px;height:1px;background:#b9b9b9"></div>
<div style="position:absolute;left:0px;top:506px;width:28px;height:1px;background:#b9b9b9"></div>
<div style="position:absolute;left:0px;top:587px;width:28px;height:1px;background:#b9b9b9"></div>
<span style="position:absolute;left:9.8px;top:285.76px;font-family:'Liberation Sans', sans-serif;font-size:15.4px;line-height:1;font-weight:400;color:#262626;letter-spacing:0px;white-space:pre;">3</span>
<span style="position:absolute;left:9.8px;top:328.56px;font-family:'Liberation Sans', sans-serif;font-size:15.4px;line-height:1;font-weight:400;color:#262626;letter-spacing:0px;white-space:pre;">4</span>
<span style="position:absolute;left:9.8px;top:408.36px;font-family:'Liberation Sans', sans-serif;font-size:15.4px;line-height:1;font-weight:400;color:#217346;letter-spacing:0px;white-space:pre;">5</span>
<span style="position:absolute;left:9.8px;top:489.36px;font-family:'Liberation Sans', sans-serif;font-size:15.4px;line-height:1;font-weight:400;color:#262626;letter-spacing:0px;white-space:pre;">6</span>
<span style="position:absolute;left:9.8px;top:570.36px;font-family:'Liberation Sans', sans-serif;font-size:15.4px;line-height:1;font-weight:400;color:#262626;letter-spacing:0px;white-space:pre;">7</span>
<div style="position:absolute;left:288px;top:226px;width:1px;height:409px;background:#000"></div>
<div style="position:absolute;left:432px;top:226px;width:1px;height:409px;background:#000"></div>
<div style="position:absolute;left:549px;top:226px;width:1px;height:409px;background:#000"></div>
<div style="position:absolute;left:705px;top:226px;width:1px;height:409px;background:#000"></div>
<div style="position:absolute;left:848px;top:226px;width:1px;height:409px;background:#000"></div>
<div style="position:absolute;left:949px;top:226px;width:1px;height:409px;background:#000"></div>
<div style="position:absolute;left:1050px;top:226px;width:1px;height:409px;background:#000"></div>
<div style="position:absolute;left:1151px;top:226px;width:1px;height:409px;background:#000"></div>
<div style="position:absolute;left:1252px;top:226px;width:1px;height:409px;background:#000"></div>
<div style="position:absolute;left:1431px;top:226px;width:1px;height:409px;background:#000"></div>
<div style="position:absolute;left:29px;top:345px;width:1403px;height:1px;background:#000"></div>
<div style="position:absolute;left:29px;top:425px;width:1403px;height:1px;background:#000"></div>
<div style="position:absolute;left:29px;top:506px;width:1403px;height:1px;background:#000"></div>
<div style="position:absolute;left:29px;top:587px;width:1403px;height:1px;background:#000"></div>
<div style="position:absolute;left:27px;top:344px;width:263px;height:83px;border:2px solid #217346;box-sizing:border-box"></div>
<div style="position:absolute;left:285px;top:422px;width:6px;height:6px;background:#fff"></div>
<div style="position:absolute;left:286px;top:423px;width:5px;height:5px;background:#217346"></div>
<span style="position:absolute;left:87.5px;top:269.26px;font-family:'Liberation Sans', sans-serif;font-size:13.4px;line-height:1;font-weight:700;color:#000;letter-spacing:-0.265px;white-space:pre;">Назва  номенклатури<span style="color:#ff0000;position:relative;top:-1px">*</span></span>
<span style="position:absolute;left:294.5px;top:238.66px;font-family:'Liberation Sans', sans-serif;font-size:13.4px;line-height:1;font-weight:700;color:#000;letter-spacing:-0.526px;white-space:pre;">Кількість товарів або</span>
<span style="position:absolute;left:308px;top:258.66px;font-family:'Liberation Sans', sans-serif;font-size:13.4px;line-height:1;font-weight:700;color:#000;letter-spacing:-0.502px;white-space:pre;">обсяг виконання</span>
<span style="position:absolute;left:306.8px;top:278.66px;font-family:'Liberation Sans', sans-serif;font-size:13.4px;line-height:1;font-weight:700;color:#000;letter-spacing:-0.375px;white-space:pre;">робіт чи надання</span>
<span style="position:absolute;left:336.8px;top:298.66px;font-family:'Liberation Sans', sans-serif;font-size:13.4px;line-height:1;font-weight:700;color:#000;letter-spacing:-0.402px;white-space:pre;">послуг<span style="color:#ff0000;position:relative;top:-1px">*</span></span>
<span style="position:absolute;left:436px;top:269.16px;font-family:'Liberation Sans', sans-serif;font-size:13.4px;line-height:1;font-weight:700;color:#000;letter-spacing:-0.004px;white-space:pre;">Одиниці виміру<span style="color:#ff0000;position:relative;top:-1px">*</span></span>
<span style="position:absolute;left:555px;top:269.16px;font-family:'Liberation Sans', sans-serif;font-size:13.4px;line-height:1;font-weight:700;color:#000;letter-spacing:-0.354px;white-space:pre;">Єдиний закупівельний</span>
<span style="position:absolute;left:562px;top:288.96px;font-family:'Liberation Sans', sans-serif;font-size:13.4px;line-height:1;font-weight:700;color:#000;letter-spacing:-0.244px;white-space:pre;">словник ДК021/CPV<span style="color:#ff0000;position:relative;top:-1px">*</span></span>
<span style="position:absolute;left:723.8px;top:238.66px;font-family:'Liberation Sans', sans-serif;font-size:13.4px;line-height:1;font-weight:700;color:#000;letter-spacing:-0.115px;white-space:pre;">Кінцевий термін</span>
<span style="position:absolute;left:714.5px;top:258.66px;font-family:'Liberation Sans', sans-serif;font-size:13.4px;line-height:1;font-weight:700;color:#000;letter-spacing:-0.503px;white-space:pre;">постачання товарів,</span>
<span style="position:absolute;left:711.3px;top:278.66px;font-family:'Liberation Sans', sans-serif;font-size:13.4px;line-height:1;font-weight:700;color:#000;letter-spacing:-0.347px;white-space:pre;">виконання робіт або</span>
<span style="position:absolute;left:727.5px;top:298.66px;font-family:'Liberation Sans', sans-serif;font-size:13.4px;line-height:1;font-weight:700;color:#000;letter-spacing:-0.446px;white-space:pre;">надання послуг</span>
<span style="position:absolute;left:878.3px;top:278.66px;font-family:'Liberation Sans', sans-serif;font-size:13.4px;line-height:1;font-weight:700;color:#000;letter-spacing:-0.382px;white-space:pre;">Країна</span>
<span style="position:absolute;left:974px;top:278.66px;font-family:'Liberation Sans', sans-serif;font-size:13.4px;line-height:1;font-weight:700;color:#000;letter-spacing:-0.674px;white-space:pre;">Область</span>
<span style="position:absolute;left:1082.8px;top:278.66px;font-family:'Liberation Sans', sans-serif;font-size:13.4px;line-height:1;font-weight:700;color:#000;letter-spacing:-0.173px;white-space:pre;">Місто</span>
<span style="position:absolute;left:1179px;top:278.66px;font-family:'Liberation Sans', sans-serif;font-size:13.4px;line-height:1;font-weight:700;color:#000;letter-spacing:-0.787px;white-space:pre;">Вулиця</span>
<span style="position:absolute;left:1321.5px;top:278.66px;font-family:'Liberation Sans', sans-serif;font-size:13.4px;line-height:1;font-weight:700;color:#000;letter-spacing:0.053px;white-space:pre;">Індекс</span>
</div></body></html>
